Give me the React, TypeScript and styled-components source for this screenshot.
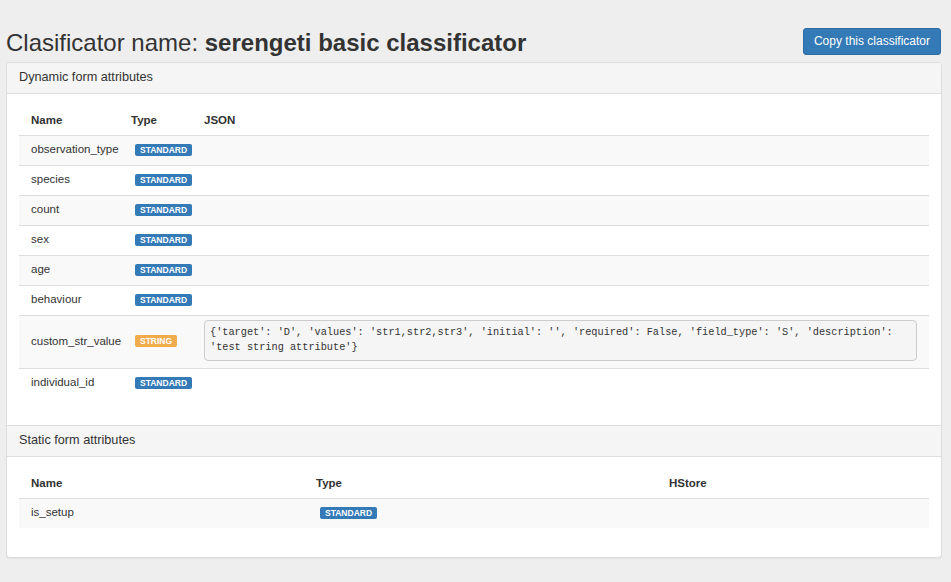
import React from "react";
import styled, { createGlobalStyle } from "styled-components";

const GlobalStyle = createGlobalStyle`
  html, body {
    margin: 0;
    padding: 0;
    background: #eeeeee;
    font-family: "Liberation Sans", Arial, Helvetica, sans-serif;
    font-size: 13px;
    color: #333;
  }
`;

interface Attr {
  name: string;
  kind: "STANDARD" | "STRING";
  json?: string;
}

const dynamicAttrs: Attr[] = [
  { name: "observation_type", kind: "STANDARD" },
  { name: "species", kind: "STANDARD" },
  { name: "count", kind: "STANDARD" },
  { name: "sex", kind: "STANDARD" },
  { name: "age", kind: "STANDARD" },
  { name: "behaviour", kind: "STANDARD" },
  {
    name: "custom_str_value",
    kind: "STRING",
    json:
      "{'target': 'D', 'values': 'str1,str2,str3', 'initial': '', 'required': False, 'field_type': 'S', 'description': 'test string attribute'}"
  },
  { name: "individual_id", kind: "STANDARD" }
];

const App: React.FC = () => {
  return (
    <Page>
      <GlobalStyle />
      <TitleRow>
        <Title>
          Clasificator name: <strong>serengeti basic classificator</strong>
        </Title>
        <Button>Copy this classificator</Button>
      </TitleRow>
      <Panel>
        <PanelHeading>Dynamic form attributes</PanelHeading>
        <PanelBody>
          <Table>
            <colgroup>
              <col style={{ width: 100 }} />
              <col style={{ width: 73 }} />
              <col />
            </colgroup>
            <thead>
              <tr>
                <Th>Name</Th>
                <Th>Type</Th>
                <Th>JSON</Th>
              </tr>
            </thead>
            <tbody>
              {dynamicAttrs.map(attr => (
                <Row key={attr.name}>
                  <Td>{attr.name}</Td>
                  <Td>
                    <Badge kind={attr.kind}>{attr.kind}</Badge>
                  </Td>
                  <Td>{attr.json && <Pre>{attr.json}</Pre>}</Td>
                </Row>
              ))}
            </tbody>
          </Table>
        </PanelBody>
        <PanelHeading bordered>Static form attributes</PanelHeading>
        <PanelBody>
          <Table>
            <colgroup>
              <col style={{ width: 285 }} />
              <col style={{ width: 353 }} />
              <col />
            </colgroup>
            <thead>
              <tr>
                <Th>Name</Th>
                <Th>Type</Th>
                <Th>HStore</Th>
              </tr>
            </thead>
            <tbody>
              <Row>
                <Td>is_setup</Td>
                <Td>
                  <Badge kind="STANDARD">STANDARD</Badge>
                </Td>
                <Td />
              </Row>
            </tbody>
          </Table>
        </PanelBody>
      </Panel>
    </Page>
  );
};

export default App;

const Page = styled.div`
  padding: 0 9px 25px 6px;
`;

const TitleRow = styled.div`
  display: flex;
  justify-content: space-between;
  align-items: flex-end;
  padding-top: 28px;
  margin-bottom: 7px;
`;

const Title = styled.h3`
  margin: 0;
  font-size: 24px;
  font-weight: normal;
  line-height: 24px;
  color: #333;
  strong {
    font-weight: bold;
  }
`;

const Button = styled.button`
  font-family: inherit;
  font-size: 12px;
  line-height: 17px;
  padding: 4px 10px;
  color: #fff;
  background: #337ab7;
  border: 1px solid #2e6da4;
  border-radius: 3px;
  margin-right: 1px;
`;

const Panel = styled.div`
  background: #fff;
  border: 1px solid #ddd;
  border-radius: 4px;
  box-shadow: 0 1px 1px rgba(0, 0, 0, 0.05);
  overflow: hidden;
`;

const PanelHeading = styled.div<{ bordered?: boolean }>`
  background: #f5f5f5;
  border-bottom: 1px solid #ddd;
  border-top: ${props => (props.bordered ? "1px solid #ddd" : "none")};
  padding: 5px 12px 0;
  height: 25px;
  line-height: 18px;
  font-size: 12.7px;
`;

const PanelBody = styled.div`
  padding: 12px;
  &:last-child {
    padding-bottom: 14px;
  }
`;

const Table = styled.table`
  width: 100%;
  border-collapse: collapse;
  table-layout: fixed;
  margin-bottom: 15px;
  font-size: 11.5px;
`;

const Th = styled.th`
  text-align: left;
  font-weight: bold;
  padding: 5px 12px 6px;
  line-height: 18px;
  border-bottom: 1px solid #ddd;
  vertical-align: middle;
`;

const Row = styled.tr`
  &:nth-child(odd) {
    background: #f9f9f9;
  }
`;

const Td = styled.td`
  padding: 4px 12px 7px;
  line-height: 18px;
  border-top: 1px solid #ddd;
  vertical-align: middle;
  &:first-child {
    white-space: nowrap;
  }
`;

const Badge = styled.span<{ kind: "STANDARD" | "STRING" }>`
  display: inline-block;
  margin-left: 4px;
  padding: 0 5px;
  height: 12px;
  line-height: 12px;
  font-size: 8.5px;
  font-weight: bold;
  color: #fff;
  border-radius: 2px;
  vertical-align: middle;
  background: ${props => (props.kind === "STRING" ? "#f0ad4e" : "#337ab7")};
`;

const Pre = styled.pre`
  margin: 0;
  padding: 4px 5px 5px;
  font-family: "Liberation Mono", "DejaVu Sans Mono", monospace;
  font-size: 10.25px;
  line-height: 15px;
  white-space: pre-wrap;
  word-break: break-word;
  background: #f5f5f5;
  border: 1px solid #ccc;
  border-radius: 4px;
  color: #333;
`;
